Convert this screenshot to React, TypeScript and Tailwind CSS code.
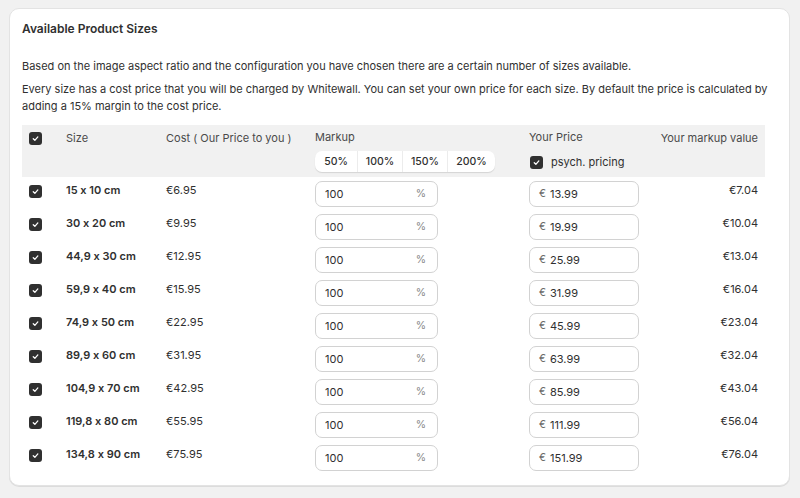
import React from 'react';

const rows = [
  { size: '15 x 10 cm', cost: '€6.95', price: '13.99', value: '€7.04' },
  { size: '30 x 20 cm', cost: '€9.95', price: '19.99', value: '€10.04' },
  { size: '44,9 x 30 cm', cost: '€12.95', price: '25.99', value: '€13.04' },
  { size: '59,9 x 40 cm', cost: '€15.95', price: '31.99', value: '€16.04' },
  { size: '74,9 x 50 cm', cost: '€22.95', price: '45.99', value: '€23.04' },
  { size: '89,9 x 60 cm', cost: '€31.95', price: '63.99', value: '€32.04' },
  { size: '104,9 x 70 cm', cost: '€42.95', price: '85.99', value: '€43.04' },
  { size: '119,8 x 80 cm', cost: '€55.95', price: '111.99', value: '€56.04' },
  { size: '134,8 x 90 cm', cost: '€75.95', price: '151.99', value: '€76.04' },
];

// Small dark checkbox, always checked in this view
const Check = () => (
  <span className="w-[13px] h-[13px] rounded-[3px] bg-[#303030] flex items-center justify-center shrink-0">
    <svg width="9" height="9" viewBox="0 0 10 10" fill="none">
      <path d="M2.5 5.2 L4.3 7 L7.6 3.2" stroke="white" strokeWidth="1.4" strokeLinecap="round" strokeLinejoin="round" />
    </svg>
  </span>
);

const cols = 'grid grid-cols-[44px_100px_149px_214px_1fr_auto]';

function App() {
  return (
    <div className="w-[800px] h-[498px] bg-[#f1f1f1] pt-[8px] pl-[9px] font-['Inter',sans-serif] [font-feature-settings:'calt'_0] text-[#303030]">
      <div className="w-[781px] h-[478px] bg-white rounded-[10px] border border-[#e3e3e3] shadow-[0_1px_0_#dcdcdc] px-[12px] pt-[13px]">
        <h2 className="text-[12px] font-semibold leading-[14px]">Available Product Sizes</h2>
        <p className="mt-[22px] text-[11px] leading-[17px]">
          Based on the image aspect ratio and the configuration you have chosen there are a certain number of sizes available.
        </p>
        <p className="mt-[6px] text-[11px] leading-[17px]">
          Every size has a cost price that you will be charged by Whitewall. You can set your own price for each size. By default the price is calculated by adding a 15% margin to the cost price.
        </p>

        <div className="mt-[10px] w-[743px]">
          <div className={`${cols} bg-[#f1f1f1] h-[52px] text-[11px] text-[#4a4a4a] pr-[7px]`}>
            <div className="pl-[7px] pt-[7px]"><Check /></div>
            <div className="pt-[5px]">Size</div>
            <div className="pt-[5px]">Cost ( Our Price to you )</div>
            <div className="flex flex-col">
              <div className="pt-[5px] leading-[14px]">Markup</div>
              <div className="mt-[7px] flex w-[180px] h-[21px] bg-white rounded-[7px] shadow-[0_1px_1px_rgba(0,0,0,0.12)] text-[10.5px] font-medium text-[#303030]">
                <span className="w-[42px] flex items-center justify-center">50%</span>
                <span className="w-[45px] flex items-center justify-center border-l border-[#ececec]">100%</span>
                <span className="w-[45px] flex items-center justify-center border-l border-[#ececec]">150%</span>
                <span className="w-[48px] flex items-center justify-center border-l border-[#ececec]">200%</span>
              </div>
            </div>
            <div className="flex flex-col">
              <div className="pt-[5px] leading-[14px]">Your Price</div>
              <div className="mt-[10px] flex items-center gap-[8px] pl-[1px] text-[#303030]">
                <Check />
                <span>psych. pricing</span>
              </div>
            </div>
            <div className="pt-[5px] text-right">Your markup value</div>
          </div>

          <div className="flex flex-col gap-[7px] pt-[4px] pr-[7px] text-[11px]">
            {rows.map((r) => (
              <div key={r.size} className={`${cols} h-[26px]`}>
                <div className="pl-[7px] pt-[4px]"><Check /></div>
                <div className="pt-[2px] font-semibold leading-[14px]">{r.size}</div>
                <div className="pt-[2px] leading-[14px]">{r.cost}</div>
                <div>
                  <div className="w-[123px] h-[26px] rounded-[7px] border border-[#d2d2d2] flex items-center justify-between pl-[9px] pr-[11px]">
                    <span>100</span>
                    <span className="text-[#8a8a8a] text-[10.5px]">%</span>
                  </div>
                </div>
                <div>
                  <div className="w-[110px] h-[26px] rounded-[7px] border border-[#d2d2d2] flex items-center pl-[9px] gap-[4px]">
                    <span className="text-[#6a6a6a] text-[10.5px]">€</span>
                    <span>{r.price}</span>
                  </div>
                </div>
                <div className="pt-[2px] text-right leading-[14px]">{r.value}</div>
              </div>
            ))}
          </div>
        </div>
      </div>
    </div>
  );
}

export default App;
